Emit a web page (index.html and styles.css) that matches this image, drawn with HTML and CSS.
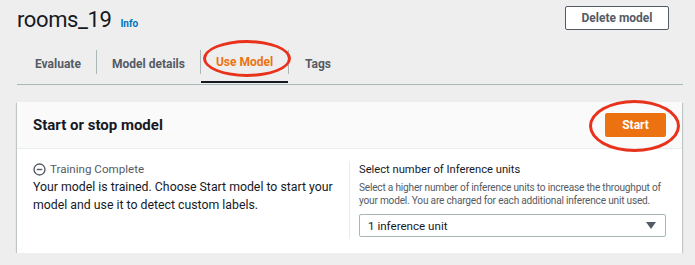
FILE: index.html
```html
<!DOCTYPE html>
<html>
<head>
<meta charset="utf-8">
<link rel="stylesheet" href="styles.css">
</head>
<body>
<div class="page">
  <div class="header">
    <div class="title-wrap">
      <h1 class="title">rooms_19</h1>
      <span class="info">Info</span>
    </div>
    <button class="btn-normal">Delete model</button>
  </div>
  <div class="tabs">
    <div class="tab tab-eval">Evaluate</div>
    <div class="sep"></div>
    <div class="tab tab-details">Model details</div>
    <div class="sep"></div>
    <div class="tab active">Use Model<span class="ring ring-tab"></span></div>
    <div class="sep"></div>
    <div class="tab tab-tags">Tags</div>
  </div>
  <div class="panel">
    <div class="panel-head">
      <h2 class="panel-title">Start or stop model</h2>
      <button class="btn-primary">Start<span class="ring ring-start"></span></button>
    </div>
    <div class="panel-body">
      <div class="col col-left">
        <div class="status">
          <svg class="status-icon" width="13" height="13" viewBox="0 0 14 14"><circle cx="7" cy="7" r="5.9" fill="none" stroke="#545b64" stroke-width="1.5"/><line x1="4" y1="7" x2="10" y2="7" stroke="#545b64" stroke-width="1.5"/></svg>
          <span>Training Complete</span>
        </div>
        <p class="body-text">Your model is trained. Choose Start model to start your model and use it to detect custom labels.</p>
      </div>
      <div class="col col-right">
        <div class="label">Select number of Inference units</div>
        <p class="desc">Select a higher number of inference units to increase the throughput of your model. You are charged for each additional inference unit used.</p>
        <div class="select">
          <span>1 inference unit</span>
          <svg width="10" height="7" viewBox="0 0 10 7"><polygon points="0,0 10,0 5,7" fill="#545b64"/></svg>
        </div>
      </div>
    </div>
  </div>
</div>
</body>
</html>
```
FILE: styles.css
```css
* { box-sizing: border-box; }
body {
  margin: 0;
  background: #eeeeee;
  font-family: Roboto, "Noto Sans", sans-serif;
  color: #16191f;
}
.page { padding: 0 0 0 17px; }
.header {
  display: flex;
  justify-content: space-between;
  align-items: flex-start;
  height: 44px;
  padding-top: 6px;
  width: 665px;
}
.title-wrap { display: flex; align-items: baseline; gap: 9px; }
.title {
  margin: 0;
  font-size: 22px;
  font-weight: 400;
  line-height: 28px;
  color: #16191f;
  letter-spacing: -0.4px;
}
.info { font-size: 10px; font-weight: 700; color: #0073bb; }
.btn-normal {
  margin-top: 0;
  margin-right: 13px;
  width: 104px;
  height: 24px;
  background: #ffffff;
  border: 1px solid #545b64;
  border-radius: 2px;
  font-family: inherit;
  font-size: 12px;
  font-weight: 700;
  color: #545b64;
  padding: 0;
}
.tabs {
  display: flex;
  align-items: center;
  height: 41px;
  width: 666px;
  border-bottom: 1px solid #aab7b8;
}
.tab {
  position: relative;
  font-size: 12px;
  font-weight: 700;
  color: #545b64;
  height: 40px;
  display: flex;
  align-items: center;
  justify-content: center;
}
.tab-eval { width: 79px; padding-left: 18px; justify-content: flex-start; }
.tab-details { width: 103px; }
.tab-tags { width: 58px; }
.tab.active {
  color: #ec7211;
  width: 87px;
  box-shadow: inset 0 -2px 0 #16191f;
  height: 39px;
  align-self: flex-start;
  padding-bottom: 4px;
}
.sep { width: 1px; height: 24px; background: #aab7b8; margin-top: -5px; }
.ring {
  position: absolute;
  border: 3px solid #e8321c;
  border-radius: 50%;
  pointer-events: none;
}
.ring-tab { left: 2px; top: -4px; width: 88px; height: 37px; }
.panel {
  margin-top: 17px;
  width: 665px;
  background: #ffffff;
  box-shadow: 0 1px 1px rgba(0,28,36,0.3), 1px 1px 1px rgba(0,28,36,0.15), -1px 1px 1px rgba(0,28,36,0.15);
}
.panel-head {
  height: 47px;
  display: flex;
  align-items: center;
  justify-content: space-between;
  padding: 0 16px;
  background: #fafafa;
  border-bottom: 1px solid #eaeded;
}
.panel-title { margin: 0; font-size: 15px; font-weight: 700; color: #16191f; }
.btn-primary {
  position: relative;
  width: 61px;
  height: 24px;
  background: #ec7211;
  border: none;
  border-radius: 2px;
  color: #ffffff;
  font-family: inherit;
  font-size: 12px;
  font-weight: 700;
  padding: 0;
}
.ring-start { left: -16px; top: -13px; width: 91px; height: 52px; }
.panel-body {
  display: flex;
  padding: 12px 0 14px;
  height: 104px;
}
.col-left { width: 332px; padding: 0 16px; }
.col-right { flex: 1; border-left: 1px solid #eaeded; padding-left: 9px; padding-right: 14px; }
.status { display: flex; align-items: center; gap: 4px; font-size: 11.6px; color: #545b64; height: 16px; }
.body-text { margin: 1px 0 0; font-size: 12.3px; line-height: 18px; color: #16191f; }
.label { font-size: 11.2px; color: #16191f; height: 16px; display: flex; align-items: center; }
.desc { margin: 4px 0 0; font-size: 10.1px; line-height: 13px; letter-spacing: -0.2px; color: #545b64; }
.select {
  margin-top: 7px;
  margin-right: 2px;
  height: 23px;
  border: 1px solid #aab7b8;
  border-radius: 2px;
  display: flex;
  align-items: center;
  justify-content: space-between;
  padding: 0 9px 0 8px;
  font-size: 11.6px;
  color: #16191f;
}
```
